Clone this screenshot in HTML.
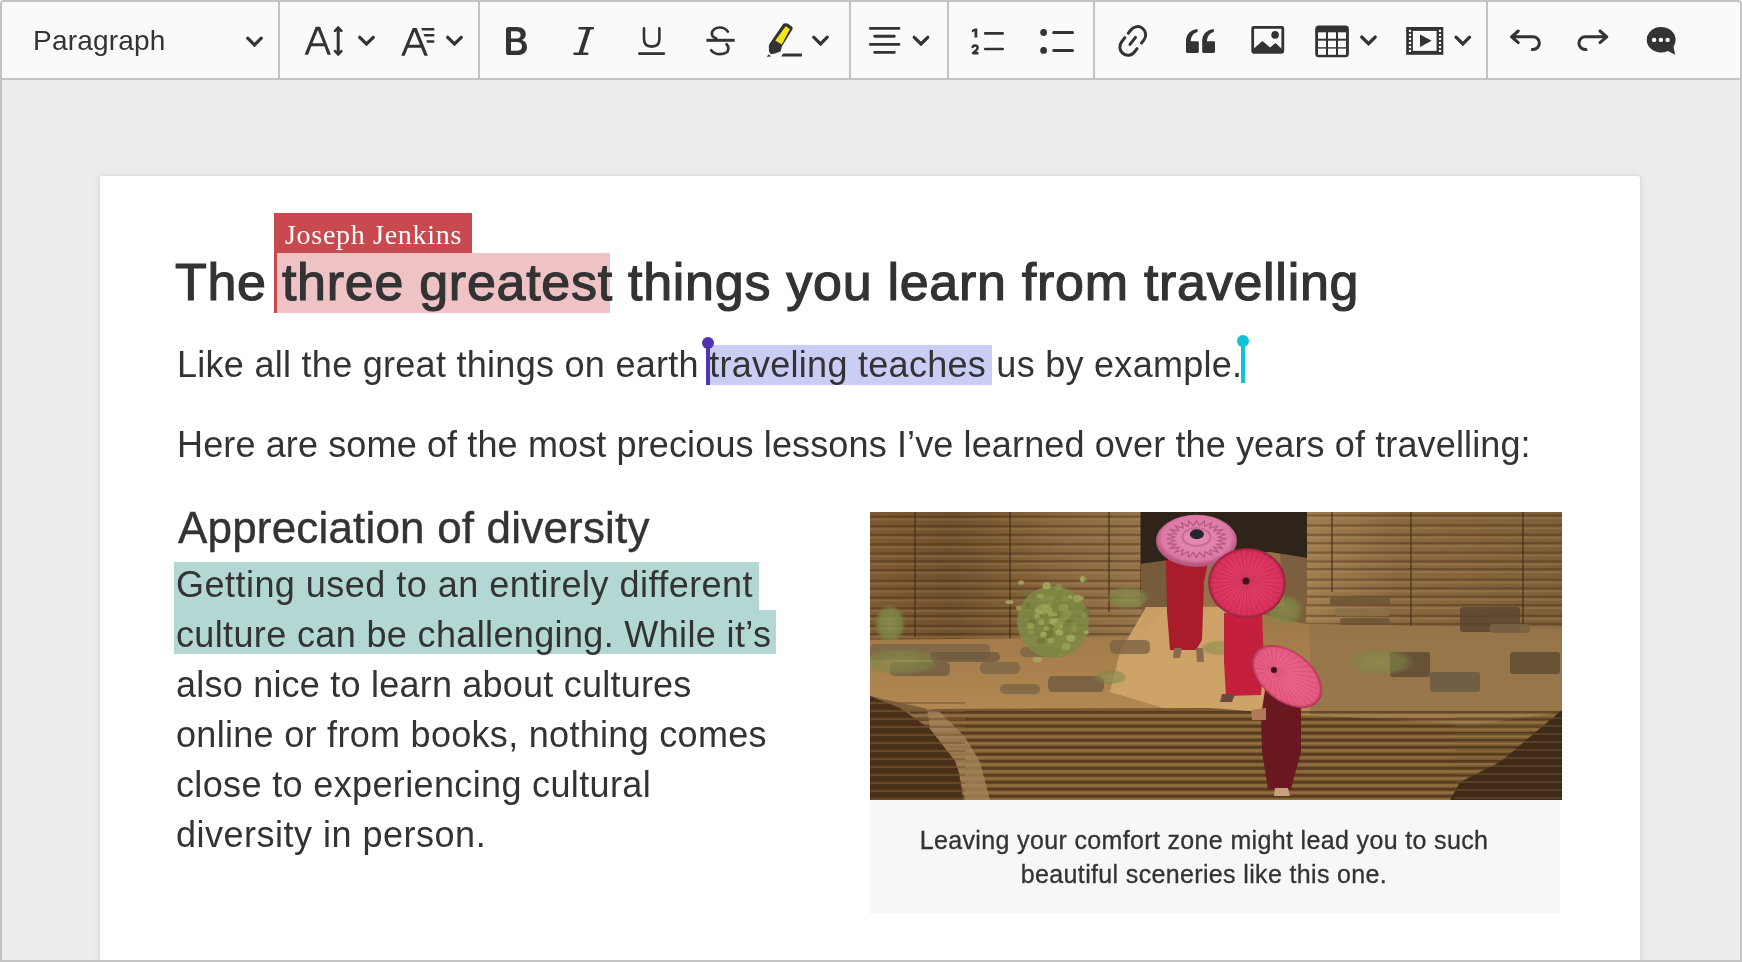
<!DOCTYPE html>
<html><head><meta charset="utf-8">
<style>
html,body{margin:0;padding:0;background:#fff;}
body{width:1742px;height:962px;overflow:hidden;position:relative;font-family:"Liberation Sans",sans-serif;color:#333;}
#ed{position:absolute;left:0;top:0;width:1742px;height:962px;box-sizing:border-box;border:2px solid #c4c4c4;border-radius:4px 4px 0 0;background:#ededed;overflow:hidden;}
#tb{position:absolute;left:0;top:0;width:1738px;height:76px;background:#fafafa;border-bottom:2px solid #c4c4c4;}
.sep{position:absolute;top:0;width:2px;height:78px;background:#c4c4c4;}
#paper{position:absolute;left:97px;top:173px;width:1540px;height:800px;background:#fff;border:1px solid #dedede;border-radius:3px;box-shadow:0 0 8px rgba(0,0,0,.08);}
.ln{position:absolute;white-space:nowrap;color:#333;}
.p{font-size:36px;letter-spacing:.2px;line-height:50px;}
.hl{position:absolute;}
</style></head><body>
<div id="ed">
  <div id="tb">
    <div style="position:absolute;will-change:transform;left:31px;top:23px;font-size:28px;line-height:32px;letter-spacing:.2px;color:#333;">Paragraph</div>
  </div>
  <div class="sep" style="left:276px"></div>
  <div class="sep" style="left:476px"></div>
  <div class="sep" style="left:847px"></div>
  <div class="sep" style="left:945px"></div>
  <div class="sep" style="left:1091px"></div>
  <div class="sep" style="left:1484px"></div>
  <div id="paper"></div>
</div>
<svg id="icons" width="1742" height="80" viewBox="0 0 1742 80" style="position:absolute;left:0;top:0"><polyline points="247.70,38.20 254.50,44.90 261.30,38.20" fill="none" stroke="#333" stroke-width="3.2" stroke-linecap="round" stroke-linejoin="miter"/><polyline points="359.70,37.30 366.50,44.00 373.30,37.30" fill="none" stroke="#333" stroke-width="3.2" stroke-linecap="round" stroke-linejoin="miter"/><polyline points="447.70,37.30 454.50,44.00 461.30,37.30" fill="none" stroke="#333" stroke-width="3.2" stroke-linecap="round" stroke-linejoin="miter"/><polyline points="813.70,37.20 820.50,43.90 827.30,37.20" fill="none" stroke="#333" stroke-width="3.2" stroke-linecap="round" stroke-linejoin="miter"/><polyline points="914.20,37.30 921.00,44.00 927.80,37.30" fill="none" stroke="#333" stroke-width="3.2" stroke-linecap="round" stroke-linejoin="miter"/><polyline points="1361.70,37.00 1368.50,43.70 1375.30,37.00" fill="none" stroke="#333" stroke-width="3.2" stroke-linecap="round" stroke-linejoin="miter"/><polyline points="1456.00,37.20 1462.80,43.90 1469.60,37.20" fill="none" stroke="#333" stroke-width="3.2" stroke-linecap="round" stroke-linejoin="miter"/><path fill-rule="evenodd" fill="#333" d="M304.6 54.8 L315.7 26.8 H320.1 L330.9 54.8 H327.5 L324.4 46.3 H311.3 L308.1 54.8 Z M312.4 43.3 H323.3 L317.9 29.9 Z"/><path d="M338.2 27.8 V54" stroke="#333" stroke-width="3"/><path d="M335 30.8 L338.2 27.6 L341.4 30.8 M335 51.2 L338.2 54.4 L341.4 51.2" fill="none" stroke="#333" stroke-width="2.6" stroke-linecap="round" stroke-linejoin="miter"/><path fill-rule="evenodd" fill="#333" d="M401.2 55.8 L412.7 28 H416.6 L427.9 55.8 H424.4 L421.1 47.7 H407.9 L404.7 55.8 Z M409.1 44.7 H419.9 L414.5 31.6 Z"/><path d="M421.2 28 H433.2 A1.3 1.3 0 0 1 433.2 30.6 H422.2 Z M423.5 34 H433.2 A1.3 1.3 0 0 1 433.2 36.6 H424.5 Z M426.2 40.2 H433.2 A1.3 1.3 0 0 1 433.2 42.8 H427.2 Z" fill="#333"/><path fill-rule="evenodd" fill="#333" d="M508.6 27 H516.8 C522.4 27 525.8 29.8 525.8 34.2 C525.8 36.9 524.3 38.9 521.8 40 C525.1 41 527 43.6 527 47.2 C527 52 523.2 55 517.6 55 H508.6 C507 55 506 54 506 52.4 V29.6 C506 28 507 27 508.6 27 Z M511 31.2 V38.6 H515.8 C519 38.6 520.6 37.4 520.6 34.9 C520.6 32.4 519 31.2 515.8 31.2 Z M511 41.9 V50.8 H516.4 C520.1 50.8 522 49.3 522 46.3 C522 43.4 520.1 41.9 516.4 41.9 Z"/><path fill="#333" d="M579.6 27 H592.8 A1.3 1.3 0 0 1 592.8 29.6 H590.4 L583 52.4 H587.2 A1.3 1.3 0 0 1 587.2 55 H574.6 A1.3 1.3 0 0 1 574.6 52.4 H578.6 L586.1 29.6 H579.6 A1.3 1.3 0 0 1 579.6 27 Z"/><path d="M644 28.2 V38.8 C644 43.9 647 46.6 651.7 46.6 C656.4 46.6 659.4 43.9 659.4 38.8 V28.2" fill="none" stroke="#333" stroke-width="2.6" stroke-linecap="round"/><rect x="638.3" y="52.2" width="26.5" height="2.8" fill="#333"/><path d="M727.8 31.6 C726 28.7 723.2 27.5 719.8 27.5 C715.2 27.5 711.9 30.1 711.9 33.6 C711.9 36.1 713.6 37.6 716.2 38.6" fill="none" stroke="#333" stroke-width="2.7" stroke-linecap="round"/><path d="M726.6 44.2 C727.9 45.5 728.4 46.8 728.4 48.5 C728.4 52.1 725 54.2 720 54.2 C716.3 54.2 713.2 52.9 711.2 50.3" fill="none" stroke="#333" stroke-width="2.7" stroke-linecap="round"/><rect x="706.4" y="38.8" width="28.3" height="3" fill="#333"/><path fill="#333" d="M783.3 23.8 Q785.5 22.6 787.5 23.6 L791.6 26.3 Q793.4 27.6 792.4 29.4 L782 46.2 L780.5 51.4 L774.8 53.6 L770.8 54.2 L769 51.4 L768.8 46.2 L769.4 44.1 Z"/><path fill="#f6e51a" d="M785.7 26.2 L789.9 28.9 L781.8 44.6 L775.3 40.5 Z"/><path fill="#333" d="M766.7 56.8 L768.8 54.2 L771.1 56.6 Z M781.2 56.6 L783.1 53.5 H802 V56.6 Z"/><path d="M870.3 28.4 H899 M874.7 36.3 H894.3 M870.3 44.4 H899 M874.7 52.4 H894.3" stroke="#333" stroke-width="2.9" stroke-linecap="round"/><path fill="#333" d="M971.9 30.2 L974.6 28.4 H977.3 V37.4 H974.5 V31.2 L971.9 32.6 Z"/><path d="M972.4 47.9 C972.6 46.2 973.8 45.4 975.1 45.4 C976.7 45.4 977.6 46.4 977.6 47.7 C977.6 49.1 976.8 50 973 53.3 H978.5" fill="none" stroke="#333" stroke-width="2.5" stroke-linejoin="round"/><path d="M985.2 33.4 H1002.7 M985.2 49 H1002.7" stroke="#333" stroke-width="2.6" stroke-linecap="round"/><circle cx="1043.6" cy="32.5" r="3.4" fill="#333"/><circle cx="1043.6" cy="50.4" r="3.4" fill="#333"/><path d="M1053.7 32.5 H1072.5 M1053.7 50.4 H1072.5" stroke="#333" stroke-width="3" stroke-linecap="round"/><g transform="translate(1132.75 40.9) rotate(37.9)" fill="none" stroke="#333" stroke-width="3" stroke-linecap="round"><path d="M-8.2 -3.3 V-7.73 A8.2 8.2 0 0 1 8.2 -7.73 V-3.7"/><path d="M8.2 3.5 V7.73 A8.2 8.2 0 0 1 -8.2 7.73 V2.3"/><path d="M0 -4.5 V4.5"/></g><path transform="translate(0 0)" fill="#333" d="M1186 51.6 V41.2 C1186 34.2 1190.4 30 1197.6 29 V31.9 C1193.4 32.9 1191 36.3 1190.7 41.2 H1197.5 C1198.3 41.2 1198.8 41.7 1198.8 42.5 V51.6 C1198.8 52.4 1198.3 52.9 1197.5 52.9 H1187.3 C1186.5 52.9 1186 52.4 1186 51.6 Z"/><path transform="translate(16.2 0)" fill="#333" d="M1186 51.6 V41.2 C1186 34.2 1190.4 30 1197.6 29 V31.9 C1193.4 32.9 1191 36.3 1190.7 41.2 H1197.5 C1198.3 41.2 1198.8 41.7 1198.8 42.5 V51.6 C1198.8 52.4 1198.3 52.9 1197.5 52.9 H1187.3 C1186.5 52.9 1186 52.4 1186 51.6 Z"/><rect x="1252.7" y="27.3" width="30.1" height="25" rx="1" fill="none" stroke="#333" stroke-width="2.8"/><circle cx="1275.1" cy="34.9" r="3.8" fill="#333"/><path fill="#333" d="M1253.5 48.8 L1262.5 40.9 L1270.1 47.6 L1275.4 43.1 L1282.5 49.5 V52.6 H1253.5 Z"/><rect x="1315.2" y="25.5" width="33.7" height="31.7" rx="3.5" fill="#333"/><rect x="1318" y="32.3" width="8" height="6.4" fill="#fafafa"/><rect x="1318" y="40.7" width="8" height="6.5" fill="#fafafa"/><rect x="1318" y="48.6" width="8" height="6.2" fill="#fafafa"/><rect x="1328" y="32.3" width="8" height="6.4" fill="#fafafa"/><rect x="1328" y="40.7" width="8" height="6.5" fill="#fafafa"/><rect x="1328" y="48.6" width="8" height="6.2" fill="#fafafa"/><rect x="1338" y="32.3" width="8" height="6.4" fill="#fafafa"/><rect x="1338" y="40.7" width="8" height="6.5" fill="#fafafa"/><rect x="1338" y="48.6" width="8" height="6.2" fill="#fafafa"/><rect x="1406.2" y="27" width="37.1" height="27.8" fill="#333"/><rect x="1412.9" y="30.9" width="23.7" height="20" fill="#fafafa"/><rect x="1408.9" y="29.799999999999997" width="2.2" height="2.2" fill="#fafafa"/><rect x="1408.9" y="33.8" width="2.2" height="2.2" fill="#fafafa"/><rect x="1408.9" y="37.8" width="2.2" height="2.2" fill="#fafafa"/><rect x="1408.9" y="41.9" width="2.2" height="2.2" fill="#fafafa"/><rect x="1408.9" y="45.9" width="2.2" height="2.2" fill="#fafafa"/><rect x="1408.9" y="49.8" width="2.2" height="2.2" fill="#fafafa"/><rect x="1438.9" y="29.799999999999997" width="2.2" height="2.2" fill="#fafafa"/><rect x="1438.9" y="33.8" width="2.2" height="2.2" fill="#fafafa"/><rect x="1438.9" y="37.8" width="2.2" height="2.2" fill="#fafafa"/><rect x="1438.9" y="41.9" width="2.2" height="2.2" fill="#fafafa"/><rect x="1438.9" y="45.9" width="2.2" height="2.2" fill="#fafafa"/><rect x="1438.9" y="49.8" width="2.2" height="2.2" fill="#fafafa"/><path fill="#333" d="M1420 34.6 L1431.6 40.8 L1420 47 Z"/><path d="M1518.3 31 L1511.5 36.8 L1518.3 42.6 M1511.5 36.8 H1533 A6.35 6.35 0 0 1 1533 49.5 H1532.3" fill="none" stroke="#333" stroke-width="3" stroke-linecap="round" stroke-linejoin="round"/><g transform="translate(3118.3 0) scale(-1 1)"><path d="M1518.3 31 L1511.5 36.8 L1518.3 42.6 M1511.5 36.8 H1533 A6.35 6.35 0 0 1 1533 49.5 H1532.3" fill="none" stroke="#333" stroke-width="3" stroke-linecap="round" stroke-linejoin="round"/></g><ellipse cx="1661.15" cy="39.8" rx="14.45" ry="12.8" fill="#333"/><path fill="#333" d="M1666 50 L1675.2 54.8 L1673 45 Z"/><circle cx="1654.1" cy="39.9" r="2.2" fill="#fafafa"/><circle cx="1660.9" cy="39.9" r="2.2" fill="#fafafa"/><circle cx="1667.6" cy="39.9" r="2.2" fill="#fafafa"/></svg>
<!-- content overlay in page coordinates -->
<div id="content" style="position:absolute;left:0;top:0;width:1742px;height:962px;will-change:transform;">
  <!-- highlights -->
  <div class="hl" style="left:274px;top:213px;width:198px;height:40px;background:#c84a4e;"></div>
  <div class="hl" style="left:276px;top:253px;width:334px;height:60px;background:#efc3c5;"></div>
  <div class="hl" style="left:274px;top:253px;width:3px;height:60px;background:#c84a4e;"></div>
  <div class="hl" style="left:710px;top:345px;width:282px;height:40px;background:#cbcef4;"></div>
  <div class="hl" style="left:174px;top:562px;width:585px;height:48px;background:#b3d8d4;"></div>
  <div class="hl" style="left:174px;top:610px;width:602px;height:44px;background:#b3d8d4;"></div>
  <div class="ln" style="left:285px;top:215px;font-family:'Liberation Serif',serif;font-size:28px;line-height:40px;color:#fff;letter-spacing:.7px;">Joseph Jenkins</div>
  <div class="ln" style="left:175px;top:252px;font-size:52px;line-height:60px;letter-spacing:.72px;-webkit-text-stroke:1.2px #333;">The three greatest things you learn from travelling</div>
  <div class="ln p" style="left:177px;top:340px;letter-spacing:.28px;">Like all the great things on earth traveling teaches us by example.</div>
  <div class="ln p" style="left:177px;top:420px;letter-spacing:.13px;">Here are some of the most precious lessons I’ve learned over the years of travelling:</div>
  <div class="ln" style="left:178px;top:503px;font-size:44px;line-height:50px;letter-spacing:.18px;-webkit-text-stroke:.4px #333;">Appreciation of diversity</div>
  <div class="ln p" style="left:176px;top:560px;letter-spacing:.47px;">Getting used to an entirely different</div>
  <div class="ln p" style="left:176px;top:610px;letter-spacing:.36px;">culture can be challenging. While it’s</div>
  <div class="ln p" style="left:176px;top:660px;letter-spacing:.22px;">also nice to learn about cultures</div>
  <div class="ln p" style="left:176px;top:710px;letter-spacing:.3px;">online or from books, nothing comes</div>
  <div class="ln p" style="left:176px;top:760px;letter-spacing:.36px;">close to experiencing cultural</div>
  <div class="ln p" style="left:176px;top:810px;letter-spacing:.5px;">diversity in person.</div>
  <!-- cursors -->
  <div class="hl" style="left:706px;top:348px;width:4px;height:37px;background:#5233b5;"></div>
  <div class="hl" style="left:702px;top:337px;width:12px;height:12px;border-radius:50%;background:#5233b5;"></div>
  <div class="hl" style="left:1241px;top:345px;width:4px;height:38px;background:#12c3d1;"></div>
  <div class="hl" style="left:1237px;top:335px;width:12px;height:12px;border-radius:50%;background:#12c3d1;"></div>
  <!-- figure -->
  <div class="hl" style="left:870px;top:800px;width:690px;height:114px;background:#f7f7f7;"></div>
  <svg id="photo" width="692" height="288" viewBox="0 0 692 288" style="position:absolute;left:870px;top:512px;display:block"><defs>
<linearGradient id="wallL" x1="0" y1="0" x2="1" y2="0"><stop offset="0" stop-color="#7e5a34"/><stop offset=".3" stop-color="#70502c"/><stop offset=".7" stop-color="#8a6840"/><stop offset="1" stop-color="#96744a"/></linearGradient>
<linearGradient id="wallR" x1="0" y1="0" x2="1" y2="0"><stop offset="0" stop-color="#a27e50"/><stop offset=".35" stop-color="#8a6840"/><stop offset="1" stop-color="#7e5e38"/></linearGradient>
<linearGradient id="sand" x1="0" y1="0" x2="0" y2="1"><stop offset="0" stop-color="#9c7646"/><stop offset="1" stop-color="#b48a54"/></linearGradient>
<radialGradient id="bush" cx=".5" cy=".5" r=".5"><stop offset="0" stop-color="#8c9650"/><stop offset=".7" stop-color="#7d8747"/><stop offset="1" stop-color="#7d8747" stop-opacity="0"/></radialGradient>
<radialGradient id="u1" cx=".5" cy=".45" r=".5"><stop offset="0" stop-color="#e48db5"/><stop offset=".85" stop-color="#dc7aa6"/><stop offset="1" stop-color="#b85a80"/></radialGradient>
<radialGradient id="u2" cx=".5" cy=".5" r=".5"><stop offset="0" stop-color="#e8456e"/><stop offset=".9" stop-color="#d9305c"/><stop offset="1" stop-color="#8a2038"/></radialGradient>
<radialGradient id="u3" cx=".5" cy=".5" r=".5"><stop offset="0" stop-color="#ef6a8e"/><stop offset=".9" stop-color="#e65a80"/><stop offset="1" stop-color="#a83050"/></radialGradient>
</defs><rect width="692" height="288" fill="#7d5f3b"/><rect x="0" y="0" width="272" height="132" fill="url(#wallL)"/><rect x="436" y="0" width="256" height="120" fill="url(#wallR)"/><rect x="0" y="3.5" width="272" height="2.2" fill="#3e2810" opacity=".38"/><rect x="0" y="6.5" width="272" height="2" fill="#b09065" opacity=".25"/><rect x="0" y="13.1" width="272" height="2.2" fill="#3e2810" opacity=".38"/><rect x="0" y="16.1" width="272" height="2" fill="#b09065" opacity=".25"/><rect x="0" y="21.7" width="272" height="2.2" fill="#3e2810" opacity=".38"/><rect x="0" y="24.7" width="272" height="2" fill="#b09065" opacity=".25"/><rect x="0" y="31.2" width="272" height="2.2" fill="#3e2810" opacity=".38"/><rect x="0" y="34.2" width="272" height="2" fill="#b09065" opacity=".25"/><rect x="0" y="40.3" width="272" height="2.2" fill="#3e2810" opacity=".38"/><rect x="0" y="43.3" width="272" height="2" fill="#b09065" opacity=".25"/><rect x="0" y="48.1" width="272" height="2.2" fill="#3e2810" opacity=".38"/><rect x="0" y="51.1" width="272" height="2" fill="#b09065" opacity=".25"/><rect x="0" y="57.0" width="272" height="2.2" fill="#3e2810" opacity=".38"/><rect x="0" y="60.0" width="272" height="2" fill="#b09065" opacity=".25"/><rect x="0" y="67.7" width="272" height="2.2" fill="#3e2810" opacity=".38"/><rect x="0" y="70.7" width="272" height="2" fill="#b09065" opacity=".25"/><rect x="0" y="75.5" width="272" height="2.2" fill="#3e2810" opacity=".38"/><rect x="0" y="78.5" width="272" height="2" fill="#b09065" opacity=".25"/><rect x="0" y="84.5" width="272" height="2.2" fill="#3e2810" opacity=".38"/><rect x="0" y="87.5" width="272" height="2" fill="#b09065" opacity=".25"/><rect x="0" y="95.0" width="272" height="2.2" fill="#3e2810" opacity=".38"/><rect x="0" y="98.0" width="272" height="2" fill="#b09065" opacity=".25"/><rect x="0" y="102.9" width="272" height="2.2" fill="#3e2810" opacity=".38"/><rect x="0" y="105.9" width="272" height="2" fill="#b09065" opacity=".25"/><rect x="0" y="112.7" width="272" height="2.2" fill="#3e2810" opacity=".38"/><rect x="0" y="115.7" width="272" height="2" fill="#b09065" opacity=".25"/><rect x="0" y="121.0" width="272" height="2.2" fill="#3e2810" opacity=".38"/><rect x="0" y="124.0" width="272" height="2" fill="#b09065" opacity=".25"/><rect x="0" y="130.3" width="272" height="2.2" fill="#3e2810" opacity=".38"/><rect x="0" y="133.3" width="272" height="2" fill="#b09065" opacity=".25"/><rect x="436" y="2.3" width="256" height="2.2" fill="#3e2810" opacity=".36"/><rect x="436" y="5.3" width="256" height="2" fill="#c0a070" opacity=".22"/><rect x="436" y="12.3" width="256" height="2.2" fill="#3e2810" opacity=".36"/><rect x="436" y="15.3" width="256" height="2" fill="#c0a070" opacity=".22"/><rect x="436" y="21.7" width="256" height="2.2" fill="#3e2810" opacity=".36"/><rect x="436" y="24.7" width="256" height="2" fill="#c0a070" opacity=".22"/><rect x="436" y="30.0" width="256" height="2.2" fill="#3e2810" opacity=".36"/><rect x="436" y="33.0" width="256" height="2" fill="#c0a070" opacity=".22"/><rect x="436" y="39.5" width="256" height="2.2" fill="#3e2810" opacity=".36"/><rect x="436" y="42.5" width="256" height="2" fill="#c0a070" opacity=".22"/><rect x="436" y="48.3" width="256" height="2.2" fill="#3e2810" opacity=".36"/><rect x="436" y="51.3" width="256" height="2" fill="#c0a070" opacity=".22"/><rect x="436" y="56.1" width="256" height="2.2" fill="#3e2810" opacity=".36"/><rect x="436" y="59.1" width="256" height="2" fill="#c0a070" opacity=".22"/><rect x="436" y="66.5" width="256" height="2.2" fill="#3e2810" opacity=".36"/><rect x="436" y="69.5" width="256" height="2" fill="#c0a070" opacity=".22"/><rect x="436" y="75.2" width="256" height="2.2" fill="#3e2810" opacity=".36"/><rect x="436" y="78.2" width="256" height="2" fill="#c0a070" opacity=".22"/><rect x="436" y="83.6" width="256" height="2.2" fill="#3e2810" opacity=".36"/><rect x="436" y="86.6" width="256" height="2" fill="#c0a070" opacity=".22"/><rect x="436" y="92.1" width="256" height="2.2" fill="#3e2810" opacity=".36"/><rect x="436" y="95.1" width="256" height="2" fill="#c0a070" opacity=".22"/><rect x="436" y="102.7" width="256" height="2.2" fill="#3e2810" opacity=".36"/><rect x="436" y="105.7" width="256" height="2" fill="#c0a070" opacity=".22"/><rect x="436" y="110.9" width="256" height="2.2" fill="#3e2810" opacity=".36"/><rect x="436" y="113.9" width="256" height="2" fill="#c0a070" opacity=".22"/><rect x="44" y="0" width="2" height="125" fill="#3e2c18" opacity=".55"/><rect x="139" y="0" width="2" height="130" fill="#3e2c18" opacity=".55"/><rect x="238" y="0" width="2" height="100" fill="#3e2c18" opacity=".55"/><rect x="270" y="0" width="2" height="90" fill="#3e2c18" opacity=".55"/><rect x="540" y="0" width="2" height="118" fill="#3e2c18" opacity=".55"/><rect x="652" y="0" width="2" height="120" fill="#3e2c18" opacity=".55"/><rect x="461" y="0" width="2" height="80" fill="#3e2c18" opacity=".55"/><rect x="271" y="0" width="166" height="95" fill="#967048"/><path d="M271 0 H437 V46 L400 40 L330 44 L271 52 Z" fill="#2e2419"/><path d="M271 52 L300 48 L300 95 L271 95 Z" fill="#6a5438" opacity=".7"/><path d="M410 42 L437 46 L437 95 L415 95 Z" fill="#6a5438" opacity=".6"/><path d="M0 128 L272 125 L300 90 L360 95 L436 112 L692 118 L692 205 L600 210 L430 203 L340 196 L58 197 L0 184 Z" fill="url(#sand)"/><path d="M440 112 L692 116 L692 205 L600 212 L440 203 Z" fill="#94744a" opacity=".85"/><path d="M276 95 L360 95 L400 150 L430 200 L300 198 L240 180 L250 140 Z" fill="#d2a66a" opacity=".9"/><rect x="460" y="85" width="60" height="8" rx="3" fill="#6b5436" opacity=".85"/><rect x="465" y="96" width="55" height="8" rx="3" fill="#8a7048" opacity=".85"/><rect x="470" y="106" width="50" height="7" rx="3" fill="#6b5436" opacity=".85"/><rect x="590" y="95" width="60" height="25" rx="3" fill="#5a4630" opacity=".85"/><rect x="620" y="112" width="40" height="9" rx="3" fill="#7a6444" opacity=".85"/><rect x="560" y="160" width="50" height="20" rx="3" fill="#6a5a44" opacity=".85"/><rect x="520" y="140" width="40" height="25" rx="3" fill="#5e4c32" opacity=".85"/><rect x="640" y="140" width="50" height="22" rx="3" fill="#5e4c32" opacity=".85"/><rect x="178" y="164" width="56" height="16" rx="5" fill="#6e5a40" opacity=".8"/><rect x="110" y="150" width="40" height="12" rx="5" fill="#7d6646" opacity=".8"/><rect x="20" y="150" width="60" height="14" rx="5" fill="#6e5a40" opacity=".8"/><rect x="240" y="128" width="40" height="14" rx="5" fill="#7a6444" opacity=".8"/><rect x="0" y="132" width="120" height="16" rx="5" fill="#7a6446" opacity=".8"/><rect x="60" y="140" width="70" height="10" rx="5" fill="#6e5a40" opacity=".8"/><rect x="150" y="135" width="40" height="10" rx="5" fill="#7a6444" opacity=".8"/><rect x="130" y="172" width="40" height="10" rx="5" fill="#7a6444" opacity=".8"/><ellipse cx="183" cy="110" rx="36" ry="36" fill="#7f8a44" opacity=".85"/><ellipse cx="176.6" cy="73.7" rx="4.1" ry="3.8" fill="#a8ac62" opacity=".8"/><ellipse cx="180.1" cy="85.9" rx="4.9" ry="2.3" fill="#8a9448" opacity=".8"/><ellipse cx="190.1" cy="113.3" rx="2.7" ry="3.9" fill="#a8ac62" opacity=".8"/><ellipse cx="188.7" cy="75.1" rx="3.3" ry="3.7" fill="#8a9448" opacity=".8"/><ellipse cx="167.0" cy="104.3" rx="2.7" ry="2.7" fill="#9aa456" opacity=".8"/><ellipse cx="213.4" cy="67.1" rx="4.0" ry="2.3" fill="#8a9448" opacity=".8"/><ellipse cx="216.8" cy="99.9" rx="3.7" ry="3.4" fill="#6e7834" opacity=".8"/><ellipse cx="151.1" cy="70.5" rx="2.8" ry="2.2" fill="#a8ac62" opacity=".8"/><ellipse cx="212.4" cy="67.1" rx="2.3" ry="3.6" fill="#a8ac62" opacity=".8"/><ellipse cx="185.6" cy="105.9" rx="3.3" ry="2.8" fill="#9aa456" opacity=".8"/><ellipse cx="204.2" cy="114.4" rx="2.1" ry="3.4" fill="#8a9448" opacity=".8"/><ellipse cx="148.7" cy="95.9" rx="2.8" ry="2.5" fill="#9aa456" opacity=".8"/><ellipse cx="180.7" cy="114.3" rx="3.8" ry="2.1" fill="#6e7834" opacity=".8"/><ellipse cx="196.1" cy="105.5" rx="2.8" ry="3.4" fill="#8a9448" opacity=".8"/><ellipse cx="167.2" cy="147.5" rx="4.7" ry="2.8" fill="#a8ac62" opacity=".8"/><ellipse cx="193.8" cy="95.7" rx="4.6" ry="3.4" fill="#9aa456" opacity=".8"/><ellipse cx="155.3" cy="80.3" rx="3.5" ry="2.9" fill="#6e7834" opacity=".8"/><ellipse cx="198.8" cy="100.9" rx="2.8" ry="2.6" fill="#8a9448" opacity=".8"/><ellipse cx="199.5" cy="109.3" rx="3.7" ry="2.0" fill="#6e7834" opacity=".8"/><ellipse cx="203.9" cy="116.8" rx="3.4" ry="3.4" fill="#8a9448" opacity=".8"/><ellipse cx="173.0" cy="99.3" rx="3.5" ry="3.2" fill="#9aa456" opacity=".8"/><ellipse cx="194.8" cy="105.0" rx="3.4" ry="3.2" fill="#8a9448" opacity=".8"/><ellipse cx="187.5" cy="117.8" rx="4.3" ry="3.7" fill="#8a9448" opacity=".8"/><ellipse cx="178.2" cy="123.7" rx="4.3" ry="2.1" fill="#6e7834" opacity=".8"/><ellipse cx="178.8" cy="119.2" rx="4.4" ry="2.5" fill="#6e7834" opacity=".8"/><ellipse cx="172.9" cy="85.9" rx="2.3" ry="3.2" fill="#8a9448" opacity=".8"/><ellipse cx="177.8" cy="97.2" rx="4.4" ry="3.9" fill="#9aa456" opacity=".8"/><ellipse cx="171.0" cy="129.1" rx="4.7" ry="2.9" fill="#6e7834" opacity=".8"/><ellipse cx="184.0" cy="103.7" rx="4.9" ry="2.6" fill="#6e7834" opacity=".8"/><ellipse cx="192.6" cy="96.3" rx="4.5" ry="2.2" fill="#8a9448" opacity=".8"/><ellipse cx="168.8" cy="98.5" rx="3.6" ry="3.7" fill="#a8ac62" opacity=".8"/><ellipse cx="173.5" cy="122.5" rx="3.3" ry="2.8" fill="#a8ac62" opacity=".8"/><ellipse cx="183.9" cy="109.4" rx="4.8" ry="3.8" fill="#a8ac62" opacity=".8"/><ellipse cx="139.5" cy="90.1" rx="4.2" ry="2.1" fill="#a8ac62" opacity=".8"/><ellipse cx="195.2" cy="86.6" rx="3.6" ry="2.6" fill="#8a9448" opacity=".8"/><ellipse cx="207.5" cy="86.4" rx="4.6" ry="3.9" fill="#9aa456" opacity=".8"/><ellipse cx="184.8" cy="103.2" rx="4.7" ry="3.4" fill="#6e7834" opacity=".8"/><ellipse cx="210.3" cy="85.9" rx="3.7" ry="2.0" fill="#9aa456" opacity=".8"/><ellipse cx="189.4" cy="120.7" rx="4.0" ry="3.0" fill="#a8ac62" opacity=".8"/><ellipse cx="216.4" cy="120.3" rx="2.3" ry="2.3" fill="#a8ac62" opacity=".8"/><ellipse cx="185.1" cy="102.4" rx="2.7" ry="2.2" fill="#9aa456" opacity=".8"/><ellipse cx="196.4" cy="134.5" rx="4.8" ry="3.6" fill="#9aa456" opacity=".8"/><ellipse cx="162.3" cy="109.7" rx="3.2" ry="3.5" fill="#6e7834" opacity=".8"/><ellipse cx="180.7" cy="128.7" rx="3.3" ry="2.9" fill="#9aa456" opacity=".8"/><ellipse cx="200.2" cy="85.0" rx="2.1" ry="2.1" fill="#a8ac62" opacity=".8"/><ellipse cx="214.0" cy="102.7" rx="2.3" ry="3.0" fill="#8a9448" opacity=".8"/><ellipse cx="186.4" cy="113.5" rx="3.2" ry="2.8" fill="#8a9448" opacity=".8"/><ellipse cx="176.3" cy="116.5" rx="3.0" ry="2.2" fill="#9aa456" opacity=".8"/><ellipse cx="179.7" cy="91.7" rx="2.2" ry="2.4" fill="#8a9448" opacity=".8"/><ellipse cx="160.5" cy="114.0" rx="3.6" ry="3.3" fill="#9aa456" opacity=".8"/><ellipse cx="170.8" cy="95.4" rx="3.1" ry="3.0" fill="#8a9448" opacity=".8"/><ellipse cx="161.4" cy="120.5" rx="3.4" ry="2.5" fill="#8a9448" opacity=".8"/><ellipse cx="180.9" cy="101.8" rx="3.3" ry="2.9" fill="#9aa456" opacity=".8"/><ellipse cx="197.3" cy="101.6" rx="4.7" ry="3.6" fill="#8a9448" opacity=".8"/><ellipse cx="200.7" cy="126.0" rx="4.8" ry="3.5" fill="#a8ac62" opacity=".8"/><ellipse cx="170.1" cy="84.0" rx="3.7" ry="2.2" fill="#9aa456" opacity=".8"/><ellipse cx="171.4" cy="110.1" rx="3.2" ry="3.1" fill="#9aa456" opacity=".8"/><ellipse cx="174.6" cy="94.1" rx="4.5" ry="2.7" fill="#9aa456" opacity=".8"/><ellipse cx="190.8" cy="109.3" rx="3.4" ry="3.4" fill="#8a9448" opacity=".8"/><ellipse cx="157.8" cy="93.5" rx="2.1" ry="3.5" fill="#6e7834" opacity=".8"/><ellipse cx="20" cy="112" rx="16" ry="20" fill="url(#bush)" opacity=".8"/><ellipse cx="30" cy="150" rx="40" ry="14" fill="url(#bush)" opacity=".6"/><ellipse cx="258" cy="86" rx="22" ry="12" fill="url(#bush)" opacity=".7"/><ellipse cx="414" cy="98" rx="20" ry="16" fill="url(#bush)" opacity=".7"/><ellipse cx="510" cy="150" rx="35" ry="14" fill="url(#bush)" opacity=".55"/><ellipse cx="240" cy="165" rx="18" ry="8" fill="url(#bush)" opacity=".6"/><ellipse cx="350" cy="136" rx="20" ry="8" fill="url(#bush)" opacity=".55"/><ellipse cx="8" cy="220" rx="12" ry="40" fill="url(#bush)" opacity=".5"/><path d="M57 197 L340 196 L431 203 L604 213 L692 200 L692 288 L95 288 L89 261 L85 249 L60 217 Z" fill="#7a5830"/><rect x="40" y="199" width="652" height="2.5" fill="#3a2410" opacity=".55"/><rect x="40" y="202.5" width="652" height="2" fill="#ae8a52" opacity=".5"/><rect x="40" y="206" width="652" height="2.5" fill="#3a2410" opacity=".55"/><rect x="40" y="209.5" width="652" height="2" fill="#ae8a52" opacity=".5"/><rect x="40" y="213" width="652" height="2.5" fill="#3a2410" opacity=".55"/><rect x="40" y="216.5" width="652" height="2" fill="#ae8a52" opacity=".5"/><rect x="40" y="220" width="652" height="2.5" fill="#3a2410" opacity=".55"/><rect x="40" y="223.5" width="652" height="2" fill="#ae8a52" opacity=".5"/><rect x="40" y="227" width="652" height="2.5" fill="#3a2410" opacity=".55"/><rect x="40" y="230.5" width="652" height="2" fill="#ae8a52" opacity=".5"/><rect x="40" y="234" width="652" height="2.5" fill="#3a2410" opacity=".55"/><rect x="40" y="237.5" width="652" height="2" fill="#ae8a52" opacity=".5"/><rect x="40" y="241" width="652" height="2.5" fill="#3a2410" opacity=".55"/><rect x="40" y="244.5" width="652" height="2" fill="#ae8a52" opacity=".5"/><rect x="40" y="248" width="652" height="2.5" fill="#3a2410" opacity=".55"/><rect x="40" y="251.5" width="652" height="2" fill="#ae8a52" opacity=".5"/><rect x="40" y="255" width="652" height="2.5" fill="#3a2410" opacity=".55"/><rect x="40" y="258.5" width="652" height="2" fill="#ae8a52" opacity=".5"/><rect x="40" y="262" width="652" height="2.5" fill="#3a2410" opacity=".55"/><rect x="40" y="265.5" width="652" height="2" fill="#ae8a52" opacity=".5"/><rect x="40" y="269" width="652" height="2.5" fill="#3a2410" opacity=".55"/><rect x="40" y="272.5" width="652" height="2" fill="#ae8a52" opacity=".5"/><rect x="40" y="276" width="652" height="2.5" fill="#3a2410" opacity=".55"/><rect x="40" y="279.5" width="652" height="2" fill="#ae8a52" opacity=".5"/><rect x="40" y="283" width="652" height="2.5" fill="#3a2410" opacity=".55"/><rect x="40" y="286.5" width="652" height="2" fill="#ae8a52" opacity=".5"/><path d="M0 180 L57 197 L60 217 L85 249 L89 261 L95 288 L120 288 L110 250 L95 225 L70 200 Z" fill="#a5845a" opacity=".8"/><path d="M0 184 L30 196 L60 217 L85 249 L89 261 L93 288 L0 288 Z" fill="#4a3018"/><rect x="0" y="190" width="95" height="2" fill="#7a5836" opacity=".6"/><rect x="0" y="198" width="95" height="2" fill="#7a5836" opacity=".6"/><rect x="0" y="206" width="95" height="2" fill="#7a5836" opacity=".6"/><rect x="0" y="214" width="95" height="2" fill="#7a5836" opacity=".6"/><rect x="0" y="222" width="95" height="2" fill="#7a5836" opacity=".6"/><rect x="0" y="230" width="95" height="2" fill="#7a5836" opacity=".6"/><rect x="0" y="238" width="95" height="2" fill="#7a5836" opacity=".6"/><rect x="0" y="246" width="95" height="2" fill="#7a5836" opacity=".6"/><rect x="0" y="254" width="95" height="2" fill="#7a5836" opacity=".6"/><rect x="0" y="262" width="95" height="2" fill="#7a5836" opacity=".6"/><rect x="0" y="270" width="95" height="2" fill="#7a5836" opacity=".6"/><rect x="0" y="278" width="95" height="2" fill="#7a5836" opacity=".6"/><rect x="0" y="286" width="95" height="2" fill="#7a5836" opacity=".6"/><path d="M692 198 L660 225 L630 250 L590 270 L580 288 L692 288 Z" fill="#3f2a16"/><rect x="585" y="205" width="107" height="2" fill="#6e5638" opacity=".5"/><rect x="585" y="213" width="107" height="2" fill="#6e5638" opacity=".5"/><rect x="585" y="221" width="107" height="2" fill="#6e5638" opacity=".5"/><rect x="585" y="229" width="107" height="2" fill="#6e5638" opacity=".5"/><rect x="585" y="237" width="107" height="2" fill="#6e5638" opacity=".5"/><rect x="585" y="245" width="107" height="2" fill="#6e5638" opacity=".5"/><rect x="585" y="253" width="107" height="2" fill="#6e5638" opacity=".5"/><rect x="585" y="261" width="107" height="2" fill="#6e5638" opacity=".5"/><rect x="585" y="269" width="107" height="2" fill="#6e5638" opacity=".5"/><rect x="585" y="277" width="107" height="2" fill="#6e5638" opacity=".5"/><rect x="585" y="285" width="107" height="2" fill="#6e5638" opacity=".5"/><path d="M296 48 L338 50 L334 70 L332 128 L326 138 L300 138 L297 100 Z" fill="#a81c2c"/><path d="M304 136 L312 136 L310 146 L303 146 Z M326 136 L333 136 L334 150 L327 150 Z" fill="#8a6a50"/><path d="M354 101 L392 100 L394 150 L391 183 L356 184 L354 150 Z" fill="#c41f3c"/><path d="M352 182 L365 182 L362 190 L350 190 Z" fill="#6a4a3a"/><path d="M395 178 L431 190 L431 240 L425 262 L421 277 L398 277 L392 240 L391 204 Z" fill="#6a1820"/><path d="M381 198 L396 196 L396 208 L382 208 Z" fill="#b07a5a"/><path d="M405 276 L418 276 L420 284 L404 284 Z" fill="#c8a080"/><ellipse cx="326.5" cy="28.8" rx="40.5" ry="26" fill="url(#u1)"/><polyline points="356.5,27.0 348.3,28.8 355.5,31.8 346.8,32.2 352.5,36.3 344.0,35.3 347.7,40.2 339.9,37.8 341.5,43.1 334.9,39.6 334.3,45.0 329.4,40.5 326.5,45.6 323.6,40.5 318.7,45.0 318.1,39.6 311.5,43.1 313.1,37.8 305.3,40.2 309.0,35.3 300.5,36.3 306.2,32.2 297.5,31.8 304.7,28.8 296.5,27.0 304.7,25.2 297.5,22.2 306.2,21.8 300.5,17.7 309.0,18.7 305.3,13.8 313.1,16.2 311.5,10.9 318.1,14.4 318.7,9.0 323.6,13.5 326.5,8.4 329.4,13.5 334.3,9.0 334.9,14.4 341.5,10.9 339.9,16.2 347.7,13.8 344.0,18.7 352.5,17.7 346.8,21.8 355.5,22.2 348.3,25.2 356.5,27.0" fill="none" stroke="#9a3c64" stroke-width="1.2" opacity=".6"/><ellipse cx="326.5" cy="25" rx="14" ry="9" fill="none" stroke="#b05078" stroke-width="2" opacity=".5"/><ellipse cx="326.9" cy="22.3" rx="7" ry="5" fill="#26262c"/><ellipse cx="377" cy="71" rx="38.8" ry="35" fill="url(#u2)"/><path d="M376 69 L414.0 71.0 M376 69 L413.4 76.8 M376 69 L411.8 82.5 M376 69 L409.0 87.8 M376 69 L405.3 92.5 M376 69 L400.8 96.7 M376 69 L395.5 100.0 M376 69 L389.7 102.5 M376 69 L383.4 104.0 M376 69 L377.0 104.5 M376 69 L370.6 104.0 M376 69 L364.3 102.5 M376 69 L358.5 100.0 M376 69 L353.2 96.7 M376 69 L348.7 92.5 M376 69 L345.0 87.8 M376 69 L342.2 82.5 M376 69 L340.6 76.8 M376 69 L340.0 71.0 M376 69 L340.6 65.2 M376 69 L342.2 59.5 M376 69 L345.0 54.2 M376 69 L348.7 49.5 M376 69 L353.2 45.3 M376 69 L358.5 42.0 M376 69 L364.3 39.5 M376 69 L370.6 38.0 M376 69 L377.0 37.5 M376 69 L383.4 38.0 M376 69 L389.7 39.5 M376 69 L395.5 42.0 M376 69 L400.8 45.3 M376 69 L405.3 49.5 M376 69 L409.0 54.3 M376 69 L411.8 59.5 M376 69 L413.4 65.2" stroke="#b02048" stroke-width=".8" opacity=".55"/><circle cx="376" cy="69" r="3.5" fill="#3a1418"/><ellipse cx="417" cy="164.5" rx="40" ry="25" transform="rotate(38 417 164.5)" fill="url(#u3)"/><path d="M404 158 L447.7 188.5 M404 158 L444.0 191.9 M404 158 L439.1 194.1 M404 158 L433.2 195.0 M404 158 L426.6 194.6 M404 158 L419.6 192.9 M404 158 L412.4 189.9 M404 158 L405.5 185.8 M404 158 L399.1 180.8 M404 158 L393.5 175.1 M404 158 L388.8 168.9 M404 158 L385.5 162.5 M404 158 L383.5 156.2 M404 158 L382.9 150.3 M404 158 L383.9 144.9 M404 158 L386.3 140.5 M404 158 L390.0 137.1 M404 158 L394.9 134.9 M404 158 L400.8 134.0 M404 158 L407.4 134.4 M404 158 L414.4 136.1 M404 158 L421.6 139.1 M404 158 L428.5 143.2 M404 158 L434.9 148.2 M404 158 L440.5 153.9 M404 158 L445.2 160.1 M404 158 L448.5 166.5 M404 158 L450.5 172.8 M404 158 L451.1 178.7 M404 158 L450.1 184.1" stroke="#c03860" stroke-width=".8" opacity=".45"/><circle cx="404" cy="158" r="3" fill="#3a1418"/></svg>
  <div class="ln" style="left:871px;top:823px;width:666px;text-align:center;font-size:25px;line-height:34px;letter-spacing:.35px;-webkit-text-stroke:.3px #333;">Leaving your comfort zone might lead you to such<br>beautiful sceneries like this one.</div>
</div>
</body></html>
